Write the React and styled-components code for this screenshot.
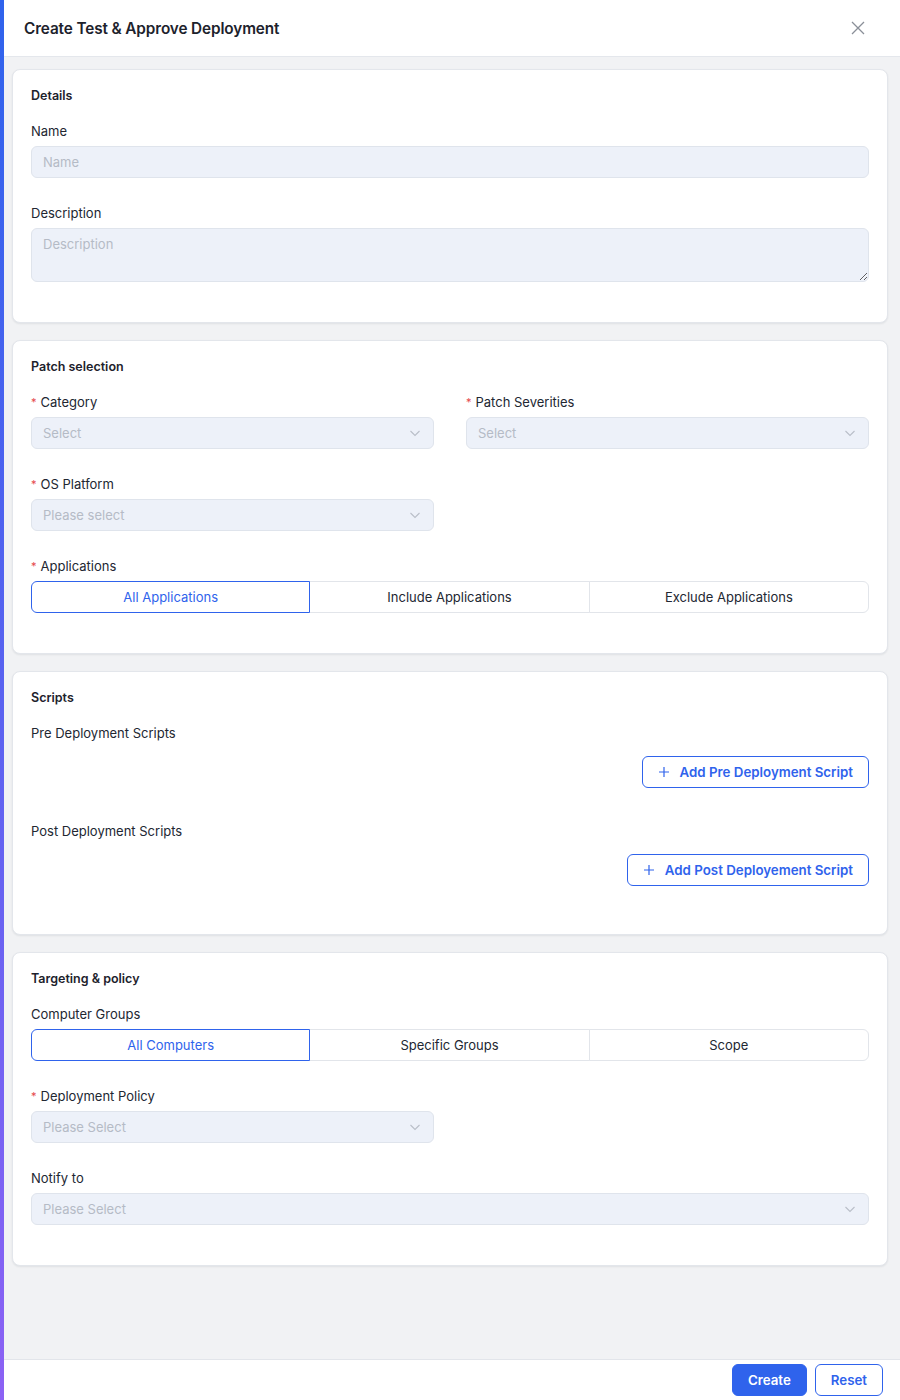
import React, { useState } from 'react';
import styled, { createGlobalStyle } from 'styled-components';

const GlobalStyle = createGlobalStyle`
  html, body {
    margin: 0;
    padding: 0;
    background: #ffffff;
  }
  body {
    font-family: Inter, "Noto Sans", "Liberation Sans", sans-serif;
    color: #1f2430;
    -webkit-font-smoothing: antialiased;
  }
  * { box-sizing: border-box; }
`;

const Drawer = styled.div`
  position: relative;
  height: 1400px;
  display: flex;
  flex-direction: column;
  background: #ffffff;
  padding-left: 4px;

  &::before {
    content: '';
    position: absolute;
    left: 0;
    top: 0;
    bottom: 0;
    width: 4px;
    background: linear-gradient(180deg, #2f63ec 0%, #5a62f0 50%, #8c62f4 100%);
  }
`;

const Header = styled.header`
  height: 57px;
  flex-shrink: 0;
  display: flex;
  align-items: center;
  justify-content: space-between;
  padding: 0 34px 0 20px;
  border-bottom: 1px solid #e4e7ec;
`;

const Title = styled.h1`
  margin: 0;
  font-size: 15.3px;
  font-weight: 600;
  letter-spacing: -0.1px;
  color: #1d222c;
`;

const CloseButton = styled.button`
  border: none;
  background: none;
  padding: 0;
  display: flex;
  color: #8a8f98;
  cursor: pointer;
`;

const Body = styled.main`
  flex: 1;
  overflow: hidden;
  background: #f1f2f4;
  padding: 12px 12px 12px 8px;
  display: flex;
  flex-direction: column;
  gap: 17px;
`;

const Card = styled.section`
  background: #ffffff;
  border: 1px solid #e3e6eb;
  border-radius: 8px;
  box-shadow: 0 1px 2px rgba(16, 24, 40, 0.08);
  padding: 16px 18px 16px 18px;
`;

const CardTitle = styled.h2`
  margin: 0 0 14px;
  font-size: 12.5px;
  line-height: 20px;
  font-weight: 600;
  color: #1d222c;
`;

const Field = styled.div`
  margin-bottom: ${(p) => p.$gap ?? 24}px;
`;

const Label = styled.label`
  display: block;
  height: 22px;
  font-size: 13px;
  line-height: 22px;
  margin-bottom: 4px;
  color: #222732;

  ${(p) =>
    p.$required &&
    `
    &::before {
      content: '*';
      display: inline-block;
      line-height: 0;
      color: #e5484d;
      font-size: 11px;
      margin-right: 4px;
      vertical-align: 1px;
    }
  `}
`;

const TextInput = styled.input`
  display: block;
  width: 100%;
  height: 32px;
  padding: 0 11px;
  font: inherit;
  font-size: 13px;
  color: #1f2430;
  background: #edf1f9;
  border: 1px solid #dfe4ec;
  border-radius: 6px;
  outline: none;

  &::placeholder { color: #b5bbc6; }
`;

const TextArea = styled.textarea`
  display: block;
  width: 100%;
  height: 54px;
  padding: 5px 11px;
  font: inherit;
  font-size: 13px;
  line-height: 20px;
  background: #edf1f9;
  border: 1px solid #dfe4ec;
  border-radius: 6px;
  outline: none;
  resize: vertical;

  &::placeholder { color: #b5bbc6; }
`;

const SelectBox = styled.div`
  display: flex;
  align-items: center;
  justify-content: space-between;
  height: 32px;
  width: ${(p) => (p.$half ? 'calc(50% - 16px)' : '100%')};
  padding: 0 12px 0 11px;
  background: #edf1f9;
  border: 1px solid #dfe4ec;
  border-radius: 6px;
  font-size: 13px;
  color: #b5bbc6;
  cursor: pointer;
`;

const Columns = styled.div`
  display: grid;
  grid-template-columns: 1fr 1fr;
  column-gap: 32px;
`;

const Segmented = styled.div`
  display: grid;
  grid-template-columns: repeat(3, 1fr);
`;

const Segment = styled.button`
  height: 32px;
  font: inherit;
  font-size: 13px;
  background: #ffffff;
  color: ${(p) => (p.$active ? '#2f63ec' : '#222732')};
  border: 1px solid ${(p) => (p.$active ? '#2f63ec' : '#e2e5ea')};
  margin-left: -1px;
  position: relative;
  z-index: ${(p) => (p.$active ? 1 : 0)};
  cursor: pointer;

  &:first-child {
    margin-left: 0;
    border-radius: 6px 0 0 6px;
  }
  &:last-child {
    border-radius: 0 6px 6px 0;
  }
`;

const ButtonRow = styled.div`
  display: flex;
  justify-content: flex-end;
  margin-top: ${(p) => p.$top ?? 0}px;
`;

const OutlineButton = styled.button`
  display: inline-flex;
  align-items: center;
  gap: 10px;
  height: 32px;
  padding: 0 15px;
  font: inherit;
  font-size: 13.3px;
  font-weight: 600;
  color: #2f63ec;
  background: #ffffff;
  border: 1px solid #2f63ec;
  border-radius: 6px;
  cursor: pointer;
`;

const Footer = styled.footer`
  height: 41px;
  flex-shrink: 0;
  display: flex;
  align-items: center;
  justify-content: flex-end;
  gap: 8px;
  padding: 0 17px 0 0;
  border-top: 1px solid #e2e5ea;
`;

const PrimaryButton = styled.button`
  height: 32px;
  padding: 0 15px;
  font: inherit;
  font-size: 13.3px;
  font-weight: 600;
  color: #ffffff;
  background: #2f63ec;
  border: 1px solid #2f63ec;
  border-radius: 6px;
  cursor: pointer;
`;

const Chevron = () => (
  <svg width="12" height="12" viewBox="0 0 12 12" fill="none">
    <path d="M1.5 4l4.5 4.5L10.5 4" stroke="#b9bec8" strokeWidth="1.1" />
  </svg>
);

const Plus = () => (
  <svg width="12" height="12" viewBox="0 0 12 12" fill="none">
    <path d="M6 1v10M1 6h10" stroke="#2f63ec" strokeWidth="1.2" />
  </svg>
);

const Cross = () => (
  <svg width="16" height="16" viewBox="0 0 16 16" fill="none">
    <path d="M2 2l12 12M14 2L2 14" stroke="currentColor" strokeWidth="1.3" />
  </svg>
);

function Select({ placeholder, half }) {
  return (
    <SelectBox $half={half}>
      <span>{placeholder}</span>
      <Chevron />
    </SelectBox>
  );
}

function SegmentGroup({ options }) {
  const [active, setActive] = useState(0);
  return (
    <Segmented>
      {options.map((o, i) => (
        <Segment key={o} $active={i === active} onClick={() => setActive(i)}>
          {o}
        </Segment>
      ))}
    </Segmented>
  );
}

export default function App() {
  return (
    <>
      <GlobalStyle />
      <Drawer>
        <Header>
          <Title>Create Test &amp; Approve Deployment</Title>
          <CloseButton aria-label="close">
            <Cross />
          </CloseButton>
        </Header>

        <Body>
          <Card>
            <CardTitle>Details</CardTitle>
            <Field>
              <Label>Name</Label>
              <TextInput placeholder="Name" />
            </Field>
            <Field>
              <Label>Description</Label>
              <TextArea placeholder="Description" />
            </Field>
          </Card>

          <Card>
            <CardTitle>Patch selection</CardTitle>
            <Columns>
              <Field>
                <Label $required>Category</Label>
                <Select placeholder="Select" />
              </Field>
              <Field>
                <Label $required>Patch Severities</Label>
                <Select placeholder="Select" />
              </Field>
            </Columns>
            <Field>
              <Label $required>OS Platform</Label>
              <Select placeholder="Please select" half />
            </Field>
            <Field>
              <Label $required>Applications</Label>
              <SegmentGroup
                options={['All Applications', 'Include Applications', 'Exclude Applications']}
              />
            </Field>
          </Card>

          <Card>
            <CardTitle>Scripts</CardTitle>
            <Field $gap={32}>
              <Label>Pre Deployment Scripts</Label>
              <ButtonRow $top={12}>
                <OutlineButton>
                  <Plus />
                  Add Pre Deployment Script
                </OutlineButton>
              </ButtonRow>
            </Field>
            <Field $gap={32}>
              <Label>Post Deployment Scripts</Label>
              <ButtonRow $top={12}>
                <OutlineButton>
                  <Plus />
                  Add Post Deployement Script
                </OutlineButton>
              </ButtonRow>
            </Field>
          </Card>

          <Card>
            <CardTitle>Targeting &amp; policy</CardTitle>
            <Field>
              <Label>Computer Groups</Label>
              <SegmentGroup options={['All Computers', 'Specific Groups', 'Scope']} />
            </Field>
            <Field>
              <Label $required>Deployment Policy</Label>
              <Select placeholder="Please Select" half />
            </Field>
            <Field>
              <Label>Notify to</Label>
              <Select placeholder="Please Select" />
            </Field>
          </Card>
        </Body>

        <Footer>
          <PrimaryButton>Create</PrimaryButton>
          <OutlineButton>Reset</OutlineButton>
        </Footer>
      </Drawer>
    </>
  );
}
